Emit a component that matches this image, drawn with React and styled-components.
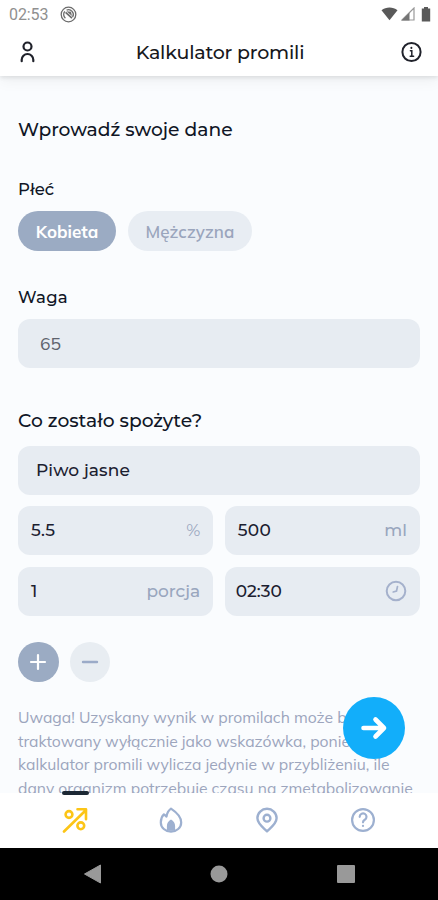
import React, { useState } from "react";
import styled, { createGlobalStyle } from "styled-components";

const GlobalStyle = createGlobalStyle`
    * {
        box-sizing: border-box;
    }

    body {
        margin: 0;
        background: #FFFFFF;
        font-family: Montserrat, Inter, "Noto Sans", sans-serif;
        color: #101626;
    }

    button {
        border: none;
        padding: 0;
        font-family: inherit;
        cursor: pointer;
    }

    svg {
        display: block;
    }
`;

const Screen = styled.div`
    display: flex;
    flex-direction: column;
    width: 438px;
    height: 900px;
    overflow: hidden;
`;

const TopArea = styled.header`
    position: relative;
    z-index: 2;
    flex: none;
    height: 76px;
    background: #FFFFFF;
    box-shadow: 0 2px 4px rgba(0, 0, 0, 0.09), 0 5px 14px rgba(0, 0, 0, 0.05);
`;

const StatusBar = styled.div`
    display: flex;
    justify-content: space-between;
    align-items: center;
    height: 28px;
    padding: 0 7px 0 9px;
`;

const StatusGroup = styled.div`
    display: flex;
    align-items: center;
    gap: ${props => props.$gap}px;
`;

const Clock = styled.span`
    font-family: Roboto, sans-serif;
    font-size: 16px;
    line-height: 20px;
    letter-spacing: -0.1px;
    padding-top: 1px;
    color: #909090;
`;

const AppBar = styled.div`
    display: flex;
    justify-content: space-between;
    align-items: center;
    height: 48px;
    padding: 0 15px 0 17px;
`;

const Title = styled.h1`
    margin: 0;
    padding-top: 1px;
    font-size: 19px;
    font-weight: 500;
    line-height: 24px;
    letter-spacing: -0.2px;
    color: #17181C;
`;

const IconButton = styled.button`
    background: transparent;
`;

const Body = styled.div`
    position: relative;
    flex: 1;
    min-height: 0;
`;

const Content = styled.main`
    height: 100%;
    overflow: hidden;
    padding: 42px 18px 0;
    background: #FAFCFE;
`;

const Heading = styled.h2`
    margin: ${props => props.$top || 0}px 0 ${props => props.$bottom}px;
    font-size: 18.7px;
    font-weight: 500;
    line-height: 24px;
`;

const Label = styled.h3`
    margin: 0 0 11px;
    padding-top: 1px;
    font-size: 16.5px;
    font-weight: 500;
    line-height: 21px;
    letter-spacing: ${props => props.$spacing || 0}px;
`;

const Pills = styled.div`
    display: flex;
    gap: 12px;
    margin-bottom: 35px;
`;

const Pill = styled.button`
    width: ${props => props.$width}px;
    height: 40px;
    border-radius: 20px;
    background: ${props => props.$active ? "#9BABC3" : "#E8EDF3"};
    color: ${props => props.$active ? "#FFFFFF" : "#9AA5BC"};
    font-family: Mulish, "Open Sans", sans-serif;
    font-size: 17px;
    font-weight: ${props => props.$active ? 700 : 600};
    letter-spacing: ${props => props.$spacing || 0}px;
`;

const Field = styled.div`
    display: flex;
    justify-content: space-between;
    align-items: center;
    height: 49px;
    padding: 0 13px ${props => props.$lift}px ${props => props.$left || 13}px;
    border-radius: 12px;
    background: #E7ECF2;
`;

const Value = styled.span`
    font-size: 17px;
    font-weight: 500;
    line-height: 22px;
    letter-spacing: ${props => props.$spacing || 0}px;
    color: #1B2030;
`;

const WeightValue = styled(Value)`
    font-family: Mulish, "Open Sans", sans-serif;
    font-size: 17.5px;
    font-weight: 400;
    color: #5D626D;
`;

const Unit = styled.span`
    font-size: 17px;
    font-weight: ${props => props.$light ? 400 : 500};
    line-height: 22px;
    padding-top: 1px;
    color: #99A6BE;
`;

const Grid = styled.div`
    display: grid;
    grid-template-columns: 1fr 1fr;
    gap: 11.5px;
    margin: 11px 0 26px;
`;

const Actions = styled.div`
    display: flex;
    gap: 11px;
    margin-bottom: 24px;
`;

const RoundButton = styled.button`
    display: flex;
    justify-content: center;
    align-items: center;
    width: 40.5px;
    height: 40.5px;
    border-radius: 50%;
    background: ${props => props.$filled ? "#9BABC3" : "#E8EDF2"};
`;

const Note = styled.p`
    margin: 0;
    font-family: Mulish, "Open Sans", sans-serif;
    font-size: 15.7px;
    line-height: 23.5px;
    color: #9CA5BD;
`;

const NoteLine = styled.span`
    display: block;
    white-space: nowrap;
`;

const NextButton = styled.button`
    position: absolute;
    right: 33px;
    bottom: 34px;
    display: flex;
    justify-content: center;
    align-items: center;
    width: 62px;
    height: 62px;
    border-radius: 50%;
    background: #12AEFA;
`;

const TabBar = styled.nav`
    position: relative;
    z-index: 1;
    flex: none;
    display: grid;
    grid-template-columns: repeat(4, 96px);
    justify-content: center;
    height: 55px;
    background: #FFFFFF;
`;

const Tab = styled.button`
    position: relative;
    display: flex;
    justify-content: center;
    align-items: center;
    padding-bottom: 2px;
    background: transparent;
    color: ${props => props.$active ? "#FCC517" : "#9DB0D0"};
`;

const Indicator = styled.span`
    position: absolute;
    top: -2px;
    left: 35px;
    width: 27px;
    height: 4px;
    border-radius: 2px;
    background: #1C2834;
`;

const SystemNav = styled.footer`
    flex: none;
    display: grid;
    grid-template-columns: repeat(3, 126.5px);
    justify-content: center;
    align-items: center;
    justify-items: center;
    height: 52px;
    background: #000000;
`;

const Stroke = ({ size = 26, width = 2, children }) => (
    <svg width={size} height={size} viewBox="0 0 26 26" fill="none" stroke="currentColor"
        strokeWidth={width} strokeLinecap="round" strokeLinejoin="round">
        {children}
    </svg>
);

const NotificationIcon = () => (
    <svg width="17" height="17" viewBox="0 0 17 17" fill="none" stroke="#6C6C6C">
        <circle cx="8.5" cy="8.5" r="7.3" strokeWidth="1.3" />
        <path d="M5.4 12.2A4.8 4.8 0 0 1 4.8 5.4M6.6 4.1A4.8 4.8 0 0 1 12.6 11" strokeWidth="1.3" />
        <path d="M5.6 6.3 12 12.2" strokeWidth="1.7" />
        <path d="m6.4 5.3 4.6.5 1 4.2Z" fill="#6C6C6C" stroke="none" />
    </svg>
);

const WifiIcon = () => (
    <svg width="17" height="14" viewBox="0 0 17 14">
        <path d="M.5 3.2C5-.5 12-.5 16.5 3.2L8.5 13.3Z" fill="#595959" />
    </svg>
);

const SignalIcon = () => (
    <svg width="14" height="14" viewBox="0 0 14 14">
        <path d="M1 13 13 1v12Z" fill="#FFFFFF" stroke="#999999" strokeWidth="1.2" />
        <path d="M.5 13.5 8.5 5.5v8Z" fill="#747474" />
    </svg>
);

const BatteryIcon = () => (
    <svg width="10" height="15" viewBox="0 0 10 15">
        <path d="M3 0h4v1.5h2.2v13H.8v-13H3Z" fill="#595959" />
    </svg>
);

const tabs = [
    {
        id: "promile",
        icon: (
            <Stroke width={2.6}>
                <path d="M2 24.5 24 3M15.5 2.2H24v10" />
                <circle cx="7" cy="7.5" r="3.4" />
                <circle cx="18.8" cy="18.8" r="3.4" />
            </Stroke>
        )
    },
    {
        id: "spalanie",
        icon: (
            <Stroke width={2.2}>
                <path d="M13 1.7C17.5 4.7 23.2 9.4 23.2 15.4A10.2 9.3 0 0 1 2.8 15.4C2.8 12 4.2 9 5.9 7.3L8.5 9.6C9 6.3 10.2 3.7 13 1.7Z" />
                <path d="M13 12.5c-2.6 1.6-4.1 3.8-4.1 6.6v3.6c1.2 1.3 7 1.3 8.2 0v-3.6c0-2.8-1.5-5-4.1-6.6Z" fill="currentColor" stroke="none" />
            </Stroke>
        )
    },
    {
        id: "miejsca",
        icon: (
            <Stroke width={2.4}>
                <path d="M13 24.3C9.5 20.8 3.4 17 3.4 11.1a9.6 9.3 0 0 1 19.2 0C22.6 17 16.5 20.8 13 24.3Z" />
                <circle cx="13" cy="11.2" r="3.4" />
            </Stroke>
        )
    },
    {
        id: "pomoc",
        icon: (
            <Stroke width={2.2}>
                <circle cx="13" cy="13" r="10.9" />
                <path d="M9.7 9.8a3.4 3.4 0 1 1 5.1 3c-1.2.7-1.8 1.2-1.8 2.5" />
                <path d="M13 18.8v.1" />
            </Stroke>
        )
    }
];

const noteLines = [
    "Uwaga! Uzyskany wynik w promilach może być",
    "traktowany wyłącznie jako wskazówka, ponieważ",
    "kalkulator promili wylicza jedynie w przybliżeniu, ile",
    "dany organizm potrzebuje czasu na zmetabolizowanie"
];

const App = () => {
    const [gender, setGender] = useState("k");
    const [tab, setTab] = useState("promile");

    return (
        <Screen>
            <GlobalStyle />
            <TopArea>
                <StatusBar>
                    <StatusGroup $gap={12}>
                        <Clock>02:53</Clock>
                        <NotificationIcon />
                    </StatusGroup>
                    <StatusGroup $gap={3}>
                        <WifiIcon />
                        <SignalIcon />
                        <span />
                        <BatteryIcon />
                    </StatusGroup>
                </StatusBar>
                <AppBar>
                    <IconButton aria-label="Profil">
                        <svg width="22" height="22" viewBox="0 0 22 22" fill="none" stroke="#20222B" strokeWidth="2.2" strokeLinecap="round">
                            <circle cx="10.5" cy="5.5" r="4" />
                            <path d="M4.7 20.2v-1.4a5.8 5.8 0 0 1 11.6 0v1.4" />
                        </svg>
                    </IconButton>
                    <Title>Kalkulator promili</Title>
                    <IconButton aria-label="Informacje">
                        <svg width="22" height="22" viewBox="0 0 22 22" fill="none" stroke="#20222B" strokeWidth="2" strokeLinecap="round">
                            <circle cx="10.5" cy="11" r="9.1" />
                            <path d="M9.4 9.8h1.4v5.2M9.2 15.2h3.4" strokeWidth="1.5" />
                            <path d="M10.4 6.8v.1" />
                        </svg>
                    </IconButton>
                </AppBar>
            </TopArea>
            <Body>
                <Content>
                    <Heading $bottom={36}>Wprowadź swoje dane</Heading>
                    <Label>Płeć</Label>
                    <Pills>
                        <Pill $width={98} $active={gender === "k"} onClick={() => setGender("k")}>Kobieta</Pill>
                        <Pill $width={124} $spacing={0.1} $active={gender === "m"} onClick={() => setGender("m")}>Mężczyzna</Pill>
                    </Pills>
                    <Label $spacing={0.3}>Waga</Label>
                    <Field $left={22} $lift={2}>
                        <WeightValue>65</WeightValue>
                    </Field>
                    <Heading $top={41} $bottom={13}>Co zostało spożyte?</Heading>
                    <Field $left={18} $lift={1}>
                        <Value $spacing={0.1}>Piwo jasne</Value>
                    </Field>
                    <Grid>
                        <Field $lift={2}>
                            <Value $spacing={0.3}>5.5</Value>
                            <Unit $light>%</Unit>
                        </Field>
                        <Field $lift={2}>
                            <Value $spacing={0.3}>500</Value>
                            <Unit>ml</Unit>
                        </Field>
                        <Field $lift={1}>
                            <Value>1</Value>
                            <Unit>porcja</Unit>
                        </Field>
                        <Field $left={11} $lift={0}>
                            <Value>02:30</Value>
                            <svg width="22" height="22" viewBox="0 0 22 22" fill="none" stroke="#A5B1CC" strokeWidth="2" strokeLinecap="round">
                                <circle cx="11" cy="11" r="9.3" />
                                <path d="M12.5 6.5 11.5 11 8.2 12" strokeWidth="1.7" />
                            </svg>
                        </Field>
                    </Grid>
                    <Actions>
                        <RoundButton $filled aria-label="Dodaj">
                            <svg width="18" height="18" viewBox="0 0 18 18" stroke="#FFFFFF" strokeWidth="2.2" strokeLinecap="round">
                                <path d="M9 2v14M2 9h14" />
                            </svg>
                        </RoundButton>
                        <RoundButton aria-label="Usuń">
                            <svg width="18" height="18" viewBox="0 0 18 18" stroke="#9BABC8" strokeWidth="2.4" strokeLinecap="round">
                                <path d="M2 9h14" />
                            </svg>
                        </RoundButton>
                    </Actions>
                    <Note>
                        {noteLines.map(line => (
                            <NoteLine key={line}>{line}</NoteLine>
                        ))}
                    </Note>
                </Content>
                <NextButton aria-label="Dalej">
                    <svg width="28" height="24" viewBox="0 0 28 24" fill="none" stroke="#FFFFFF" strokeWidth="4.6" strokeLinecap="round" strokeLinejoin="round">
                        <path d="M3.5 12H23.5M15.5 3.5l8.5 8.5-8.5 8.5" />
                    </svg>
                </NextButton>
            </Body>
            <TabBar>
                {tabs.map(({ id, icon }) => (
                    <Tab key={id} aria-label={id} $active={tab === id} onClick={() => setTab(id)}>
                        {tab === id && <Indicator />}
                        {icon}
                    </Tab>
                ))}
            </TabBar>
            <SystemNav>
                <svg width="18" height="20" viewBox="0 0 18 20">
                    <path d="M.5 10 16.5 1v18Z" fill="#999999" stroke="#999999" strokeLinejoin="round" />
                </svg>
                <svg width="18" height="18" viewBox="0 0 18 18">
                    <circle cx="9" cy="9" r="8.5" fill="#999999" />
                </svg>
                <svg width="18" height="18" viewBox="0 0 18 18">
                    <rect width="18" height="18" rx="1" fill="#999999" />
                </svg>
            </SystemNav>
        </Screen>
    );
};

export default App;
